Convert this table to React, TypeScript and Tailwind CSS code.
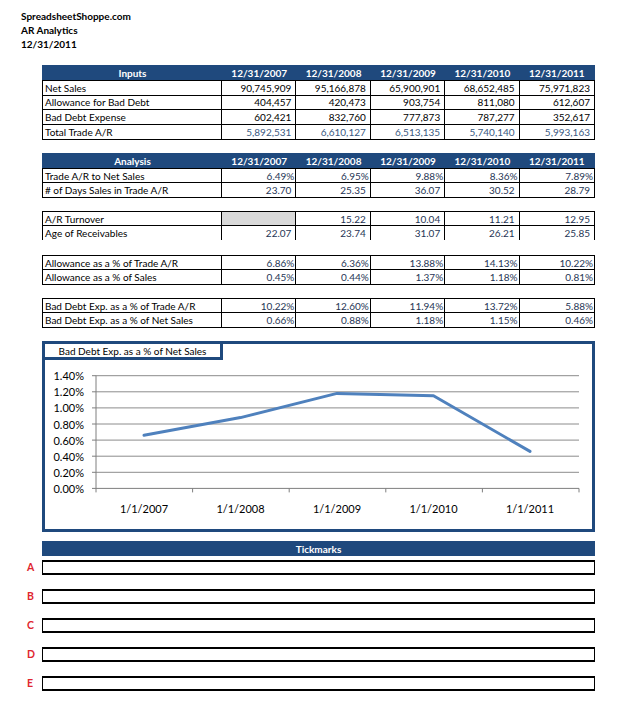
import React from "react";

const COLS = "grid grid-cols-[179px_repeat(5,minmax(0,1fr))]";
const DATES = ["12/31/2007", "12/31/2008", "12/31/2009", "12/31/2010", "12/31/2011"];

type Cell = { v: string; pct?: boolean; gray?: boolean };

function HeaderBar({ title }: { title: string }) {
  return (
    <div className={`${COLS} w-[553px] h-[15px] px-[1px] bg-[#1f497d] text-white font-bold text-[10px] leading-none items-center`}>
      <div className="text-center">{title}</div>
      {DATES.map((d) => (
        <div key={d} className="text-center">{d}</div>
      ))}
    </div>
  );
}

function Row({ label, cells, h, color }: { label: string; cells: Cell[]; h: string; color: string }) {
  return (
    <div className={`${COLS} ${h} divide-x divide-black`}>
      <div className="flex items-center pl-[2px] text-black">{label}</div>
      {cells.map((c, i) => (
        <div
          key={i}
          className={`flex items-center justify-end ${c.pct ? "pr-[1px]" : "pr-[4px]"} ${c.gray ? "bg-[#d9d9d9]" : ""}`}
          style={{ color }}
        >
          {c.v}
        </div>
      ))}
    </div>
  );
}

const n = (arr: string[]): Cell[] => arr.map((v) => ({ v }));
const p = (arr: string[]): Cell[] => arr.map((v) => ({ v, pct: true }));

function Chart() {
  const gridY = [0, 1, 2, 3, 4, 5, 6, 7].map((i) => 15.7 + 16.1 * i);
  const yLabels = ["1.40%", "1.20%", "1.00%", "0.80%", "0.60%", "0.40%", "0.20%", "0.00%"];
  const xTicks = [51, 147.6, 244.2, 340.8, 437.4, 534];
  const xCenters = [99, 195.5, 292, 388.5, 485];
  const xLabels = ["1/1/2007", "1/1/2008", "1/1/2009", "1/1/2010", "1/1/2011"];
  const vals = [0.66, 0.88, 1.18, 1.15, 0.46];
  const base = 128.4;
  const scale = (base - 15.7) / 1.4;
  const pts = vals.map((v, i) => `${xCenters[i]},${(base - v * scale).toFixed(1)}`).join(" ");
  return (
    <div className="w-[553px] h-[191px] border-[3px] border-[#1f497d] bg-white flex flex-col">
      <div className="w-[178px] h-[16px] border-r-[3px] border-b-[3px] border-[#1f497d] flex items-center justify-center text-[10px] leading-none text-black">
        Bad Debt Exp. as a % of Net Sales
      </div>
      <svg width="547" height="169" viewBox="0 0 547 169" className="block">
        {gridY.map((y, i) => (
          <line key={i} x1={51} x2={534} y1={y} y2={y} stroke={i === 7 ? "#7f7f7f" : "#8c8c8c"} strokeWidth={1} />
        ))}
        {gridY.map((y, i) => (
          <line key={"t" + i} x1={47} x2={51} y1={y} y2={y} stroke="#7f7f7f" strokeWidth={1} />
        ))}
        <line x1={51} x2={51} y1={15.7} y2={base} stroke="#7f7f7f" strokeWidth={1} />
        {xTicks.map((x, i) => (
          <line key={"x" + i} x1={x} x2={x} y1={base} y2={base + 4} stroke="#7f7f7f" strokeWidth={1} />
        ))}
        {yLabels.map((l, i) => (
          <text
            key={l}
            x={39}
            y={gridY[i]}
            textAnchor="end"
            dominantBaseline="central"
            fontFamily="Lato, sans-serif"
            fontSize={11}
            fill="#000"
          >
            {l}
          </text>
        ))}
        {xLabels.map((l, i) => (
          <text
            key={l}
            x={xCenters[i]}
            y={148}
            textAnchor="middle"
            dominantBaseline="central"
            fontFamily="Lato, sans-serif"
            fontSize={11}
            fill="#000"
          >
            {l}
          </text>
        ))}
        <polyline points={pts} fill="none" stroke="#4f81bd" strokeWidth={3} strokeLinejoin="round" strokeLinecap="round" />
      </svg>
    </div>
  );
}

export default function App() {
  const AV = "#1f3656";
  return (
    <div className="w-[634px] h-[724px] bg-white font-[Lato,sans-serif] text-[10px] leading-none text-black">
      <div className="pl-[21px] pt-[9px] font-bold text-[10px] leading-[14px]">
        <div>SpreadsheetShoppe.com</div>
        <div>AR Analytics</div>
        <div>12/31/2011</div>
      </div>

      <div className="ml-[42px] mt-[14px] flex flex-col">
        <HeaderBar title="Inputs" />
        <div className="w-[553px] border border-black divide-y divide-black">
          <Row h="h-[14.5px]" color="#000" label="Net Sales" cells={n(["90,745,909", "95,166,878", "65,900,901", "68,652,485", "75,971,823"])} />
          <Row h="h-[14.5px]" color="#000" label="Allowance for Bad Debt" cells={n(["404,457", "420,473", "903,754", "811,080", "612,607"])} />
          <Row h="h-[14.5px]" color="#000" label="Bad Debt Expense" cells={n(["602,421", "832,760", "777,873", "787,277", "352,617"])} />
          <Row h="h-[14.5px]" color="#3a5a82" label="Total Trade A/R" cells={n(["5,892,531", "6,610,127", "6,513,135", "5,740,140", "5,993,163"])} />
        </div>

        <div className="mt-[13px]">
          <HeaderBar title="Analysis" />
        </div>
        <div className="w-[553px] border border-black divide-y divide-black">
          <Row h="h-[14px]" color={AV} label="Trade A/R to Net Sales" cells={p(["6.49%", "6.95%", "9.88%", "8.36%", "7.89%"])} />
          <Row h="h-[14px]" color={AV} label="# of Days Sales in Trade A/R" cells={n(["23.70", "25.35", "36.07", "30.52", "28.79"])} />
        </div>

        <div className="mt-[13px] w-[553px] border-x border-t border-black divide-y divide-black">
          <Row h="h-[14px]" color={AV} label="A/R Turnover" cells={[{ v: "", gray: true }, ...n(["15.22", "10.04", "11.21", "12.95"])]} />
          <Row h="h-[14px]" color={AV} label="Age of Receivables" cells={n(["22.07", "23.74", "31.07", "26.21", "25.85"])} />
        </div>

        <div className="mt-[15px] w-[553px] border border-black divide-y divide-black">
          <Row h="h-[14px]" color={AV} label="Allowance as a % of Trade A/R" cells={p(["6.86%", "6.36%", "13.88%", "14.13%", "10.22%"])} />
          <Row h="h-[14px]" color={AV} label="Allowance as a % of Sales" cells={p(["0.45%", "0.44%", "1.37%", "1.18%", "0.81%"])} />
        </div>

        <div className="mt-[13px] w-[553px] border border-black divide-y divide-black">
          <Row h="h-[14px]" color={AV} label="Bad Debt Exp. as a % of Trade A/R" cells={p(["10.22%", "12.60%", "11.94%", "13.72%", "5.88%"])} />
          <Row h="h-[14px]" color={AV} label="Bad Debt Exp. as a % of Net Sales" cells={p(["0.66%", "0.88%", "1.18%", "1.15%", "0.46%"])} />
        </div>

        <div className="mt-[13px]">
          <Chart />
        </div>

        <div className="mt-[9px] w-[553px] h-[15px] bg-[#1f497d] text-white font-bold text-[10px] flex items-center justify-center">
          Tickmarks
        </div>
      </div>

      <div className="mt-[4px] flex flex-col gap-[14px]">
        {["A", "B", "C", "D", "E"].map((l) => (
          <div key={l} className="flex items-center">
            <div className="w-[42px] pl-[27px] font-bold text-[10.5px] text-[#e0262f]">{l}</div>
            <div className="w-[553px] h-[15px] border-y-2 border-x border-black"></div>
          </div>
        ))}
      </div>
    </div>
  );
}
